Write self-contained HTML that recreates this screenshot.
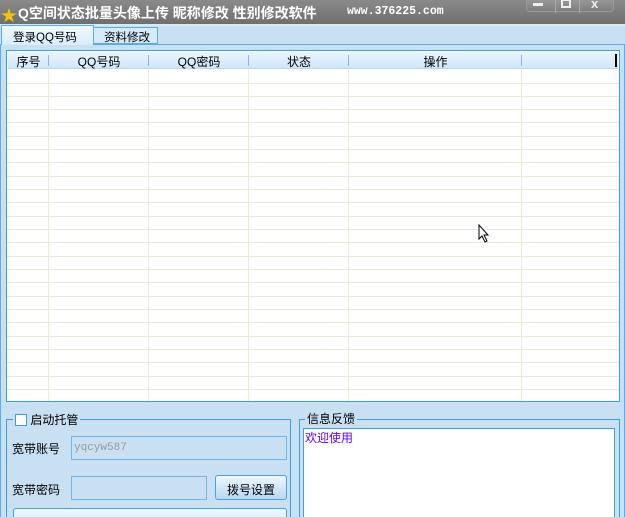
<!DOCTYPE html>
<html><head><meta charset="utf-8"><style>
*{margin:0;padding:0;box-sizing:border-box}
html,body{width:625px;height:517px;overflow:hidden}
body{background:#c9e0f3;font-family:"Liberation Sans","Noto Sans CJK SC","WenQuanYi Zen Hei",sans-serif;font-size:12px;position:relative;color:#000}
.abs{position:absolute;white-space:nowrap}
#title{left:0;top:0;width:625px;height:24px;background:linear-gradient(#8a8a8a,#6f6f6f);color:#fff;font-weight:bold;font-size:13px}
#grid{left:6px;top:50px;width:614px;height:352px;border:1px solid #3aa0e0;background:#fff;overflow:hidden}
.hdr{position:absolute;top:1px;left:1px;right:1px;height:17px;background:linear-gradient(#eaf5fd,#cfe7fa);border-bottom:1px solid #b8d8f0}
.hdr span{position:absolute;top:1px;text-align:center}
.vl{position:absolute;top:18px;bottom:0;width:1px;background:#ece9d8}
.hl{position:absolute;left:0;right:0;height:1px;background:#ece9d8}
.grp{border:1px solid #3aa0e0}
.lbl{background:#c9e0f3;padding:0 2px}
.inp{border:1px solid #6fb6ec;background:#c9e0f3}
</style></head><body>
<div id="title" class="abs">
 <span class="abs" style="left:1px;top:2px;color:#f5c400;font-size:16px">★</span>
 <span class="abs" style="left:18px;top:3px;font-size:14px">Q空间状态批量头像上传 昵称修改 性别修改软件</span>
 <span class="abs" style="left:347px;top:5px;font-family:'Liberation Mono',monospace;font-size:11.5px">www.376225.com</span>
 <div class="abs" style="left:526px;top:-2px;width:88px;height:14px;border:1px solid #9a9a9a;border-radius:0 0 4px 4px;background:linear-gradient(#9a9a9a,#7d7d7d)">
  <span class="abs" style="left:6px;top:4px;width:10px;height:3px;background:#eee"></span>
  <span class="abs" style="left:28px;top:0;width:1px;height:14px;background:#aaa"></span>
  <span class="abs" style="left:34px;top:0;width:10px;height:9px;border:2px solid #eee"></span>
  <span class="abs" style="left:52px;top:0;width:1px;height:14px;background:#aaa"></span>
  <span class="abs" style="left:64px;top:-3px;color:#eee;font-weight:bold">x</span>
 </div>
</div>
<div class="abs" style="left:0;top:24px;width:625px;height:2px;background:#dbe9f5"></div>
<div class="abs" style="left:0;top:44px;width:625px;height:473px;border-left:1px solid #5aaee8;border-right:1px solid #5aaee8;border-top:1px solid #5aaee8"></div>
<div class="abs" style="left:1px;top:25px;width:93px;height:20px;background:linear-gradient(#f0f8fe,#d9edfb);border:1px solid #5aaee8;border-bottom:none;padding:3px 0 0 11px;font-size:11.5px">登录QQ号码</div>
<div class="abs" style="left:93px;top:27px;width:65px;height:17px;background:#d6eafa;border:1px solid #5aaee8;padding:1px 0 0 10px;font-size:11.5px">资料修改</div>
<div id="grid" class="abs">
 <div class="hdr">
  <span style="left:0;width:41px">序号</span><span style="left:41px;width:100px">QQ号码</span><span style="left:141px;width:100px">QQ密码</span><span style="left:241px;width:100px">状态</span><span style="left:341px;width:173px">操作</span>
  <span style="left:40px;top:3px;width:1px;height:11px;background:#8ab8dc"></span><span style="left:140px;top:3px;width:1px;height:11px;background:#8ab8dc"></span><span style="left:240px;top:3px;width:1px;height:11px;background:#8ab8dc"></span><span style="left:340px;top:3px;width:1px;height:11px;background:#8ab8dc"></span><span style="left:513px;top:3px;width:1px;height:11px;background:#8ab8dc"></span><span style="left:607px;top:2px;width:2px;height:13px;background:#000"></span>
 </div>
 <div class="vl" style="left:41px"></div><div class="vl" style="left:141px"></div><div class="vl" style="left:241px"></div><div class="vl" style="left:341px"></div><div class="vl" style="left:514px"></div>
 <div class="hl" style="top:32px"></div><div class="hl" style="top:45px"></div><div class="hl" style="top:58px"></div><div class="hl" style="top:71px"></div><div class="hl" style="top:85px"></div><div class="hl" style="top:98px"></div><div class="hl" style="top:111px"></div><div class="hl" style="top:125px"></div><div class="hl" style="top:138px"></div><div class="hl" style="top:151px"></div><div class="hl" style="top:165px"></div><div class="hl" style="top:178px"></div><div class="hl" style="top:191px"></div><div class="hl" style="top:205px"></div><div class="hl" style="top:218px"></div><div class="hl" style="top:231px"></div><div class="hl" style="top:245px"></div><div class="hl" style="top:258px"></div><div class="hl" style="top:271px"></div><div class="hl" style="top:285px"></div><div class="hl" style="top:298px"></div><div class="hl" style="top:311px"></div><div class="hl" style="top:325px"></div><div class="hl" style="top:338px"></div>
 <svg class="abs" style="left:471px;top:173px" width="12" height="19" viewBox="0 0 12 19"><path d="M1 1L1 15L4 12L7 18L9 17L6 11L10 11Z" fill="#fff" stroke="#000"/></svg>
</div>
<div class="abs grp" style="left:6px;top:419px;width:285px;height:110px"></div>
<div class="abs lbl" style="left:13px;top:411px"><span style="display:inline-block;width:12px;height:12px;border:1px solid #3aa0e0;background:#fff;vertical-align:-2px"></span> 启动托管</div>
<div class="abs" style="left:12px;top:440px">宽带账号</div>
<div class="abs inp" style="left:71px;top:436px;width:216px;height:24px;color:#999;font-family:'Liberation Mono',monospace;font-size:11px;padding:5px 0 0 2px">yqcyw587</div>
<div class="abs" style="left:12px;top:481px">宽带密码</div>
<div class="abs inp" style="left:71px;top:476px;width:136px;height:24px"></div>
<div class="abs" style="left:215px;top:475px;width:72px;height:25px;border:1px solid #4aa0e0;border-radius:3px;background:linear-gradient(#eef7fe,#b7d9f3);text-align:center;padding-top:5px">拨号设置</div>
<div class="abs" style="left:13px;top:508px;width:274px;height:20px;border:1px solid #4aa0e0;border-radius:3px;background:linear-gradient(#eef7fe,#d6ebfb)"></div>
<div class="abs grp" style="left:299px;top:419px;width:321px;height:110px"></div>
<div class="abs lbl" style="left:305px;top:410px">信息反馈</div>
<div class="abs" style="left:303px;top:428px;width:312px;height:100px;border:1px solid #3aa0e0;background:#fff;color:#6000ff;padding:0 0 0 1px">欢迎使用</div>
</body></html>
